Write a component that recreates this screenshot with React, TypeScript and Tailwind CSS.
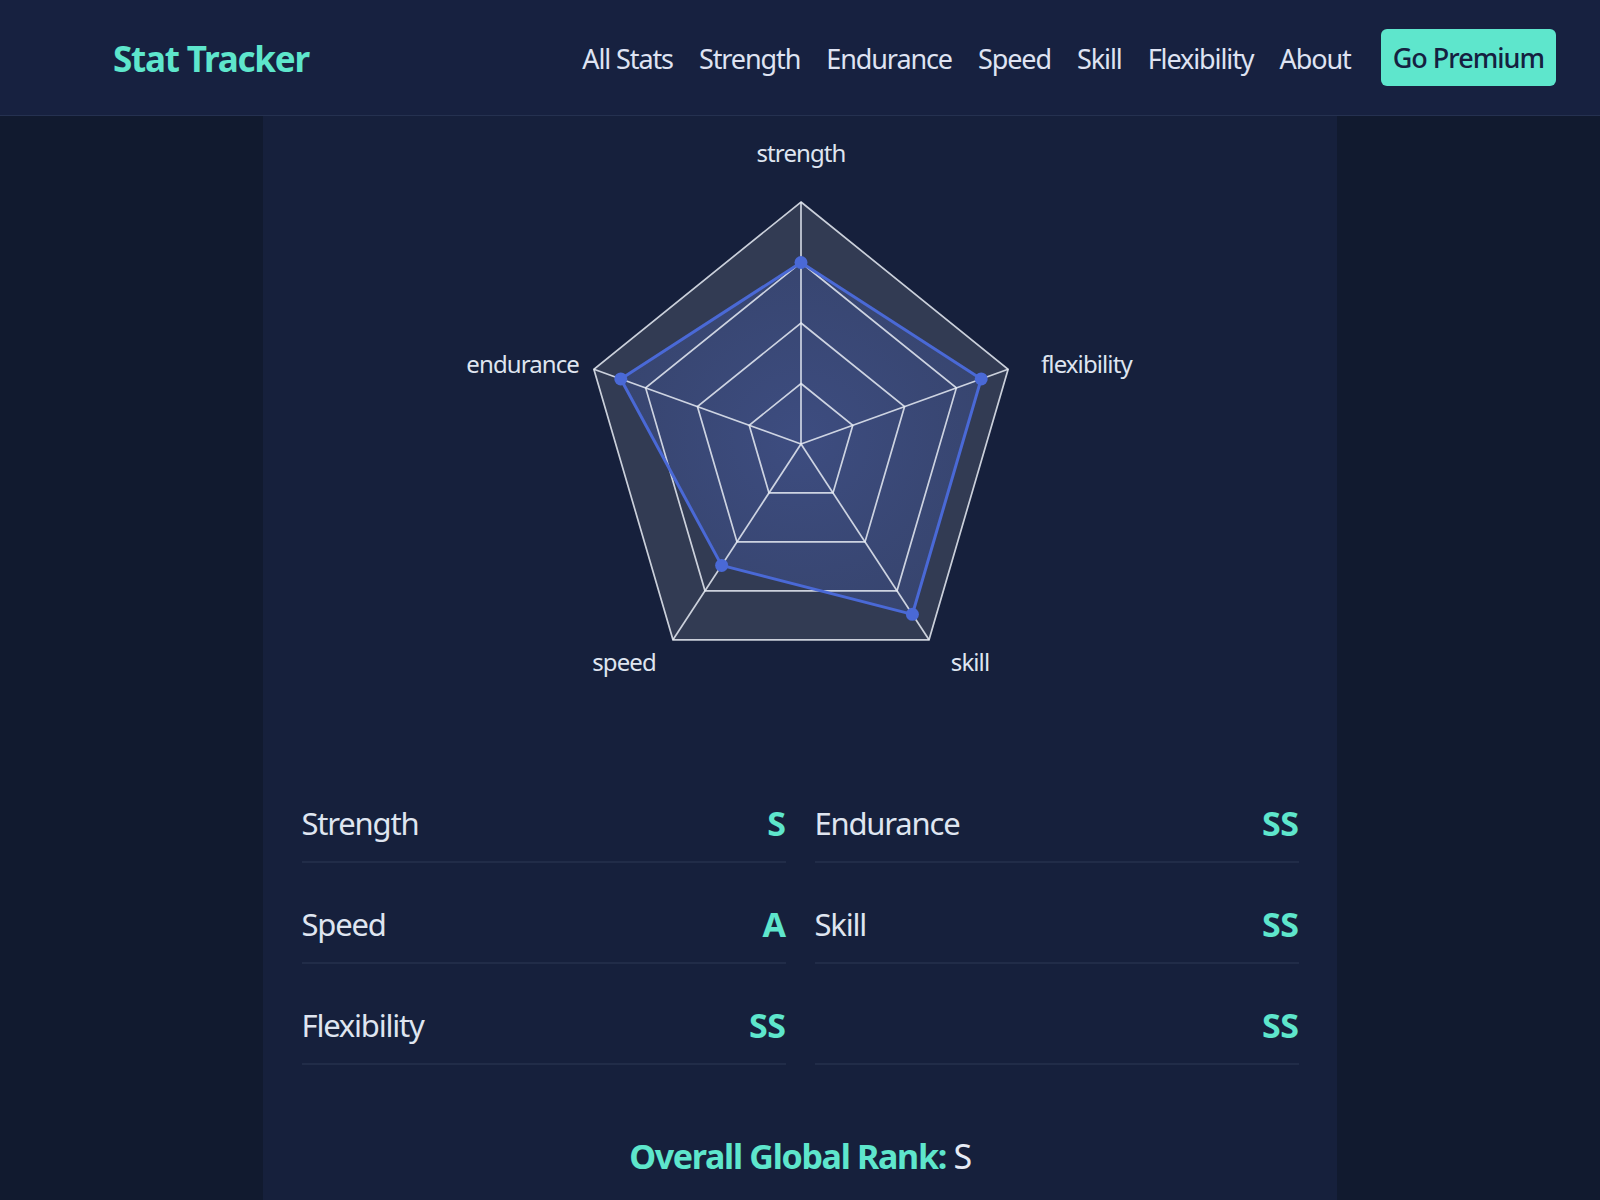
import React from 'react'

const navLinks = ['All Stats', 'Strength', 'Endurance', 'Speed', 'Skill', 'Flexibility', 'About']

const stats: { label: string; rank: string }[] = [
  { label: 'Strength', rank: 'S' },
  { label: 'Endurance', rank: 'SS' },
  { label: 'Speed', rank: 'A' },
  { label: 'Skill', rank: 'SS' },
  { label: 'Flexibility', rank: 'SS' },
  { label: '', rank: 'SS' },
]

// axis order, clockwise from top
const axes = [
  { key: 'strength', value: 0.75 },
  { key: 'flexibility', value: 0.87 },
  { key: 'skill', value: 0.87 },
  { key: 'speed', value: 0.62 },
  { key: 'endurance', value: 0.87 },
]

const CX = 352
const CY = 328
const R = 242
const XS = 0.9

function pt(i: number, r: number): [number, number] {
  const a = (i * 72 * Math.PI) / 180
  return [CX + XS * R * r * Math.sin(a), CY - R * r * Math.cos(a)]
}

function ring(r: number) {
  return axes.map((_, i) => pt(i, r).join(',')).join(' ')
}

function RadarChart() {
  const data = axes.map((a, i) => pt(i, a.value))
  const grid = 'rgba(232,236,244,0.85)'
  return (
    <svg width={702} height={600} viewBox="0 0 702 600" className="mx-auto block">
      <defs>
        <radialGradient id="glow" cx="50%" cy="50%" r="60%">
          <stop offset="0%" stopColor="#5572e0" stopOpacity="0.32" />
          <stop offset="100%" stopColor="#4a69d6" stopOpacity="0.2" />
        </radialGradient>
      </defs>
      <polygon points={ring(1)} fill="rgba(255,255,255,0.12)" />
      <polygon points={data.map((p) => p.join(',')).join(' ')} fill="url(#glow)" />
      {[1, 0.75, 0.5, 0.25].map((r) => (
        <polygon key={r} points={ring(r)} fill="none" stroke={grid} strokeWidth={1.7} />
      ))}
      {axes.map((_, i) => {
        const [x, y] = pt(i, 1)
        return <line key={i} x1={CX} y1={CY} x2={x} y2={y} stroke={grid} strokeWidth={1.7} />
      })}
      <polygon
        points={data.map((p) => p.join(',')).join(' ')}
        fill="none"
        stroke="#4a69d6"
        strokeWidth={3}
        strokeLinejoin="round"
      />
      {data.map(([x, y], i) => (
        <circle key={i} cx={x} cy={y} r={6.5} fill="#4a69d6" />
      ))}
      <g fill="#dfe5f0" fontSize={24} letterSpacing={-0.9} dominantBaseline="central">
        <text x={352} y={36} textAnchor="middle">strength</text>
        <text x={130} y={247} textAnchor="end">endurance</text>
        <text x={592} y={247} textAnchor="start">flexibility</text>
        <text x={175} y={545} textAnchor="middle">speed</text>
        <text x={521} y={545} textAnchor="middle">skill</text>
      </g>
    </svg>
  )
}

export default function App() {
  return (
    <div className="flex min-h-screen flex-col bg-[#111a2f] text-[#dfe5f0] [font-family:'Noto_Sans',sans-serif]">
      <header className="flex h-[116px] shrink-0 items-center justify-between border-b border-[#253150] bg-[#172140] pl-[113px] pr-[44px]">
        <div className="pt-[3px] text-[35px] font-bold tracking-[-1.2px] text-[#5ee6cc]">Stat Tracker</div>
        <nav className="flex items-center gap-[26px]">
          {navLinks.map((l) => (
            <a key={l} href="#" className="pt-[3px] text-[27px] tracking-[-1.1px] text-[#dfe3f2]">
              {l}
            </a>
          ))}
          <button className="ml-[4px] rounded-md bg-[#5ee6cc] px-[12px] py-[10px] text-[27px] font-medium leading-[37px] tracking-[-1px] text-[#152040]">
            Go Premium
          </button>
        </nav>
      </header>

      <main className="mx-auto flex w-[1074px] flex-1 flex-col bg-[#16203c]">
        <RadarChart />

        <div className="mx-auto mt-[46px] grid w-[997px] grid-cols-2 gap-x-[29px]">
          {stats.map((s, i) => (
            <div
              key={i}
              className="flex h-[101px] items-center justify-between border-b-2 border-[#212c48] pt-[24px]"
            >
              <span className="text-[31px] tracking-[-1.2px]">{s.label}</span>
              <span className="text-[34px] font-bold tracking-[-0.5px] text-[#5ee6cc]">{s.rank}</span>
            </div>
          ))}
        </div>

        <div className="mt-[67px] pb-[40px] text-center text-[34px] leading-[48px] tracking-[-1.3px]">
          <span className="font-bold text-[#5ee6cc]">Overall Global Rank:</span>{' '}
          <span className="text-[#e6ebf5]">S</span>
        </div>
      </main>
    </div>
  )
}
